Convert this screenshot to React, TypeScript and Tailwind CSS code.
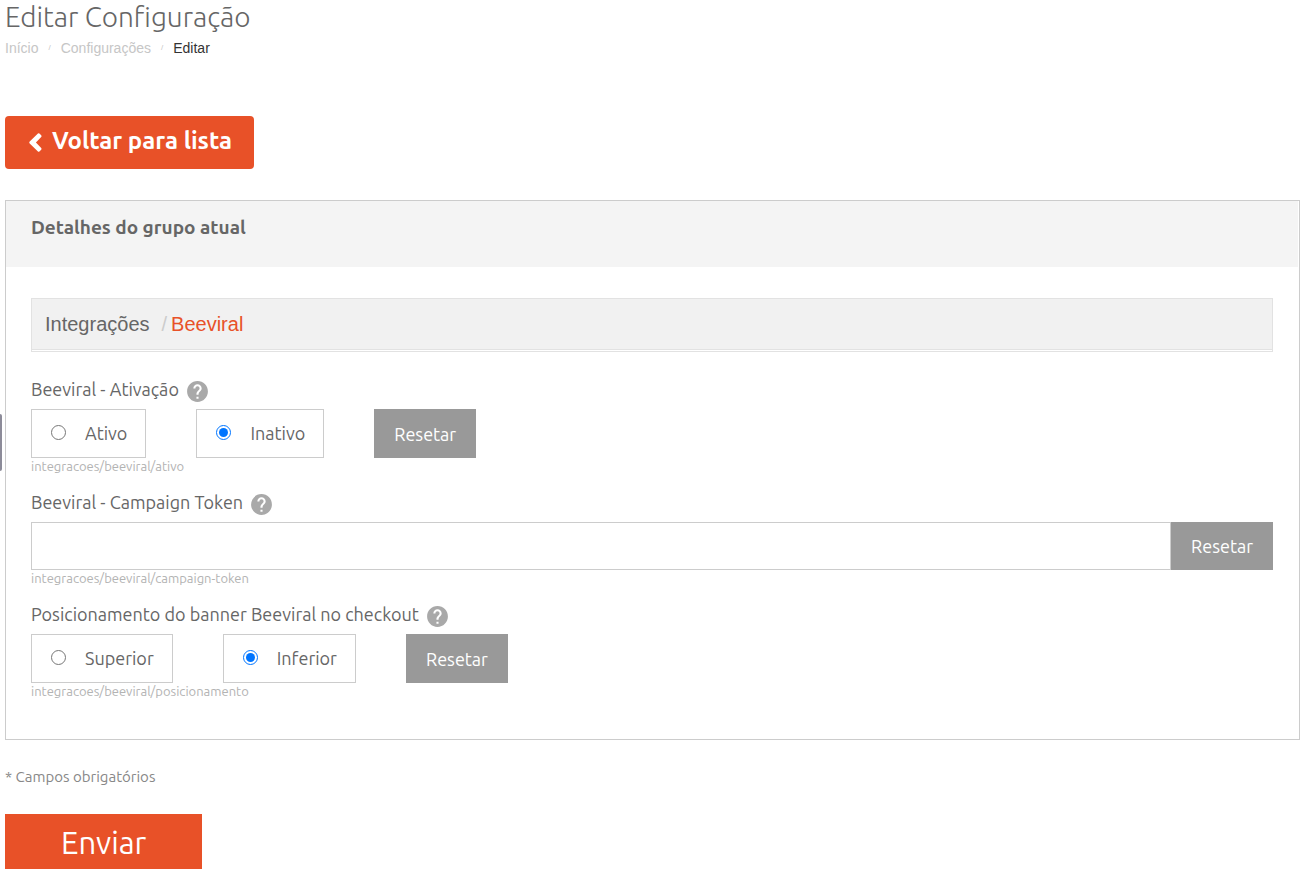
import { useState } from "react";
import { MdHelp } from "react-icons/md";

const resetButton =
  "bg-[#999999] px-5 font-['Ubuntu','Noto_Sans',sans-serif] text-lg leading-6 text-white";

function FieldLabel({ text, htmlFor, id }: { text: string; htmlFor?: string; id?: string }) {
  return (
    <div className="flex h-7 items-start gap-1.5">
      {htmlFor ? (
        <label htmlFor={htmlFor} className="text-lg leading-4">
          {text}
        </label>
      ) : (
        <span id={id} className="text-lg leading-4">
          {text}
        </span>
      )}
      <MdHelp aria-hidden="true" className="-mt-0.5 size-[25px] text-[#a9a9a9]" />
    </div>
  );
}

function Hint({ text }: { text: string }) {
  return <p className="pb-0.5 text-[13px] leading-4 text-[#b3b3b3]">{text}</p>;
}

function RadioField(props: {
  name: string;
  label: string;
  hint: string;
  options: string[];
  initial: string;
}) {
  const [value, setValue] = useState(props.initial);
  const labelId = `${props.name}-label`;
  return (
    <div>
      <FieldLabel text={props.label} id={labelId} />
      <div role="radiogroup" aria-labelledby={labelId} className="flex h-[49px] gap-[50px]">
        {props.options.map((option) => (
          <label
            key={option}
            className="flex items-center gap-[19px] border border-[#cccccc] pr-[18px] pb-0.5 pl-[19px] text-lg leading-6"
          >
            <input
              type="radio"
              name={props.name}
              checked={value === option}
              onChange={() => setValue(option)}
              className="size-[15px]"
            />
            {option}
          </label>
        ))}
        <button type="button" className={resetButton} onClick={() => setValue(props.initial)}>
          Resetar
        </button>
      </div>
      <Hint text={props.hint} />
    </div>
  );
}

function TokenField() {
  const [value, setValue] = useState("");
  return (
    <div>
      <FieldLabel text="Beeviral - Campaign Token" htmlFor="campaign-token" />
      <div className="flex h-12">
        <input
          id="campaign-token"
          type="text"
          value={value}
          onChange={(e) => setValue(e.target.value)}
          className="min-w-0 flex-1 border border-[#cccccc] px-3 text-lg"
        />
        <button type="button" className={resetButton} onClick={() => setValue("")}>
          Resetar
        </button>
      </div>
      <Hint text="integracoes/beeviral/campaign-token" />
    </div>
  );
}

export default function App() {
  return (
    <main className="min-h-screen bg-white pr-[11px] pb-[5px] pl-[5px] font-['Ubuntu','Noto_Sans',sans-serif] text-[#666666]">
      <div className="absolute top-[414px] left-0 h-[57px] w-0.5 rounded-r-sm bg-[#8c8b99]" />

      <header>
        <h1 className="pb-0.5 text-[28px] leading-[34px] font-light">Editar Configuração</h1>
        <nav
          aria-label="Trilha"
          className="flex items-center gap-2.5 font-['Liberation_Sans',sans-serif] text-sm leading-6 text-[#c6c6c6]"
        >
          <a href="#inicio">Início</a>
          <span className="text-[8px]">/</span>
          <a href="#configuracoes">Configurações</a>
          <span className="text-[8px]">/</span>
          <span className="text-[#333333]">Editar</span>
        </nav>
      </header>

      <a
        href="#lista"
        className="mt-14 inline-flex h-[53px] items-center gap-2.5 rounded-sm bg-[#e85128] pr-[22px] pb-1 pl-6 text-2xl font-bold text-white"
      >
        <svg viewBox="0 0 12 18" className="mt-1 h-[19px] w-[13px]" aria-hidden="true">
          <path
            d="M8.3 0.4 L0.5 8.1 Q-0.3 9 0.5 9.9 L8.3 17.6 Q9 18.2 9.7 17.5 L11.4 15.8 Q12 15 11.4 14.3 L6.4 9 L11.4 3.7 Q12 3 11.4 2.2 L9.7 0.5 Q9 -0.2 8.3 0.4 Z"
            fill="currentColor"
          />
        </svg>
        Voltar para lista
      </a>

      <form onSubmit={(e) => e.preventDefault()}>
        <section className="mt-[31px] border border-[#cccccc]">
          <div className="mr-px h-[66px] bg-[#f4f4f4] px-[25px] pt-3.5">
            <h2 className="text-[19px] leading-6 font-bold">Detalhes do grupo atual</h2>
          </div>
          <div className="px-[25px] pt-[31px] pb-[38px]">
            <div className="mr-px border border-[#e2e2e2] pb-px">
              <nav
                aria-label="Grupo"
                className="flex h-[51px] items-center border-b border-[#e2e2e2] bg-[#f1f1f1] px-[13px] font-['Liberation_Sans',sans-serif] text-xl"
              >
                <a href="#integracoes">Integrações</a>
                <span className="pr-1 pl-3 text-[#cccccc]">/</span>
                <span className="text-[#e85128]">Beeviral</span>
              </nav>
            </div>
            <div className="mt-[29px] mr-px flex flex-col gap-[18px]">
              <RadioField
                name="ativo"
                label="Beeviral - Ativação"
                hint="integracoes/beeviral/ativo"
                options={["Ativo", "Inativo"]}
                initial="Inativo"
              />
              <TokenField />
              <RadioField
                name="posicionamento"
                label="Posicionamento do banner Beeviral no checkout"
                hint="integracoes/beeviral/posicionamento"
                options={["Superior", "Inferior"]}
                initial="Inferior"
              />
            </div>
          </div>
        </section>

        <p className="mt-[27px] text-[15px] leading-5 text-[#888888]">* Campos obrigatórios</p>
        <button
          type="submit"
          className="mt-[27px] block h-[55px] bg-[#e85128] px-14 pt-0.5 text-[31px] leading-9 text-white"
        >
          Enviar
        </button>
      </form>
    </main>
  );
}
